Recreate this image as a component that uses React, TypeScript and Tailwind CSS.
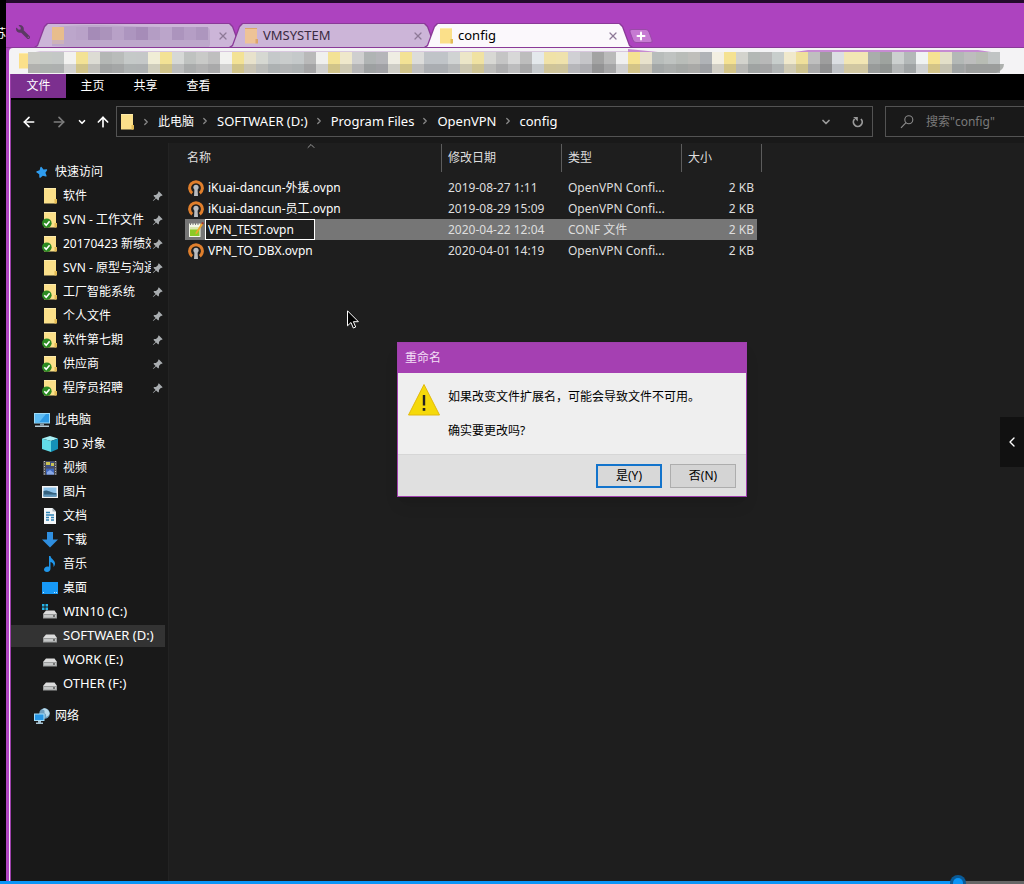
import type { ReactNode } from "react"
import { ArrowLeft, ArrowRight, ArrowUp, ChevronDown, ChevronLeft, ChevronRight, ChevronUp, Plus, X } from "lucide-react"
import { FaStar, FaWrench } from "react-icons/fa"
import { BsPinAngleFill } from "react-icons/bs"

const ribbon = ["主页", "共享", "查看"]

const folders = ["SOFTWAER (D:)", "Program Files", "OpenVPN", "config"]

const quickAccess = [
  { label: "软件", synced: false },
  { label: "SVN - 工作文件", synced: true },
  { label: "20170423 新绩效", synced: true },
  { label: "SVN - 原型与沟通", synced: false },
  { label: "工厂智能系统", synced: true },
  { label: "个人文件", synced: false },
  { label: "软件第七期", synced: true },
  { label: "供应商", synced: true },
  { label: "程序员招聘", synced: true },
]

const files = [
  { name: "iKuai-dancun-外援.ovpn", date: "2019-08-27 1:11", type: "OpenVPN Confi...", size: "2 KB" },
  { name: "iKuai-dancun-员工.ovpn", date: "2019-08-29 15:09", type: "OpenVPN Confi...", size: "2 KB" },
  { name: "VPN_TEST.ovpn", date: "2020-04-22 12:04", type: "CONF 文件", size: "2 KB", editing: true },
  { name: "VPN_TO_DBX.ovpn", date: "2020-04-01 14:19", type: "OpenVPN Confi...", size: "2 KB" },
]

// one colour per 12px block, left to right
const barBlocks = [
  "#c9cac4", "#c5c9c5", "#c4c8c6", "#f2f2f0", "#f3e295", "#dddcd4", "#b4b7b5", "#b9bcba", "#c5c9c8",
  "#c5c8c8", "#f0edd6", "#f3e295", "#d6d8d6", "#bfc2c0", "#c9cac8", "#bfbfbf", "#f2f2f0", "#f3e295",
  "#e8e2cc", "#d6d8d2", "#c5c9ca", "#c9cccc", "#c5c9ca", "#b9b9b9", "#f0f0ee", "#f3e295", "#efe8cb",
  "#cfcfcf", "#b0b4b4", "#b5b5b9", "#efede3", "#f3e295", "#dcdcda", "#c0c4c8", "#c0c4c8", "#d0d3d3",
  "#ece6c8", "#f0e2a2", "#d8d8d4", "#c5c5c5", "#d8d8d8", "#bdbdbd", "#e4e9ec", "#f0e2a8", "#efe2ac",
  "#d0d0d4", "#c5c5c8", "#a3a3a3", "#bababa", "#f0f0f0", "#f5e292", "#e8e2cc", "#b8bdbb", "#bfc3c1",
  "#b9bdb9", "#bfbfbb", "#b0b3b7", "#f3efe2", "#f5e292", "#d3d3cd", "#b3b8b5", "#b8b8b8", "#c8cecc",
  "#f0e9cc", "#efe09b", "#bfbfbf", "#9e9e9e", "#dcdfe3", "#f2e6b4", "#f2e6b4", "#a9adab", "#9ea39f",
  "#ccd0cf", "#b3b8b8", "#f0f3f3", "#f5e292", "#e3dfc8", "#b3b8b6", "#bdbdbd", "#b8bcb4", "#c0c4c4",
]

const tabBlocks = [
  "#e8bd8c", "#bca6cb", "#b9a2c8", "#a58bb7", "#ab93bb", "#b8a1c7", "#ad95bf", "#a68cb8", "#b49dc4",
  "#bba5ca", "#ac94bd", "#b59ec5", "#ad96be",
]

function FolderIcon({ synced = false, dimmed = false }: { synced?: boolean; dimmed?: boolean }) {
  return (
    <svg viewBox="0 0 16 16" className="size-4 shrink-0" aria-hidden="true">
      <path d="M2 0h12v15.500H2z" fill={dimmed ? "#eec397" : "#fbe08a"} />
      <path d="M12.500 11H15v4.500h-2.500z" fill={dimmed ? "#dca56c" : "#e3bb55"} />
      <path d="M2 0h12v1H2z" fill={dimmed ? "#dca56c" : "#fdebab"} />
      {synced && (
        <>
          <circle cx="4.800" cy="11.200" r="4.800" fill="#2c8a22" />
          <path d="M2.300 11.300l1.900 2 3.400-4" fill="none" stroke="#fff" strokeWidth="1.600" />
        </>
      )}
    </svg>
  )
}

function MonitorIcon() {
  return (
    <svg viewBox="0 0 16 16" className="size-4 shrink-0" aria-hidden="true">
      <path d="M0 1h16v10.500H0z" fill="#9fdcf8" />
      <path d="M1 2h14v8.500H1z" fill="#2e9be6" />
      <path d="M1 2h11L5 10.500H1z" fill="#5fbdf4" />
      <path d="M6 11.500h4v2H6z" fill="#8aa0ad" />
      <path d="M1 13.500h14v1.500H1z" fill="#b7cbd6" />
    </svg>
  )
}

function CubeIcon() {
  return (
    <svg viewBox="0 0 16 16" className="size-4 shrink-0" aria-hidden="true">
      <path d="M8 0l8 2.500L9 5 0 2.500z" fill="#a9f0f5" />
      <path d="M0 2.500L9 5v11L0 13z" fill="#62dbe6" />
      <path d="M9 5l7-2.500V13l-7 3z" fill="#1591b8" />
    </svg>
  )
}

function VideoIcon() {
  return (
    <svg viewBox="0 0 16 16" className="size-4 shrink-0" aria-hidden="true">
      <path d="M1 1h14v14H1z" fill="#4d4d50" />
      <path d="M4 1.500h8v6H4z" fill="#3e4f86" />
      <path d="M4 2h4v3H4zM9 3h3v3H9z" fill="#c9c253" />
      <path d="M4 8.500h8v6H4z" fill="#3f66bd" />
      <path d="M5 12l3-2 4 3v1.500H5z" fill="#89a9e8" />
      <path d="M2.500 1v14M13.500 1v14" stroke="#c4c4c4" strokeWidth="1" strokeDasharray="1 1.500" />
    </svg>
  )
}

function PictureIcon() {
  return (
    <svg viewBox="0 0 16 16" className="size-4 shrink-0" aria-hidden="true">
      <path d="M0 2h16v12H0z" fill="#f4f4f4" />
      <path d="M1.500 3.500h13v9h-13z" fill="#8fc4ec" />
      <path d="M1.500 7c4-2 7 2 13 2v3.500h-13z" fill="#35617e" />
      <path d="M1.500 10.500h13v2h-13z" fill="#5f97bd" />
    </svg>
  )
}

function DocumentIcon() {
  return (
    <svg viewBox="0 0 16 16" className="size-4 shrink-0" aria-hidden="true">
      <path d="M2 0h8.500L14 3.500V16H2z" fill="#f3f6f8" />
      <path d="M10.500 0L14 3.500h-3.500z" fill="#a8b4bb" />
      <path d="M4 4.500h4M4 7h8M4 9.500h3M9 9.500h3M4 12h3M9 12h3" stroke="#2f83b5" strokeWidth="1.300" />
    </svg>
  )
}

function DownloadIcon() {
  return (
    <svg viewBox="0 0 16 16" className="size-4 shrink-0" aria-hidden="true">
      <path d="M5 0h6v7.500h5L8 15.500 0 7.500h5z" fill="#2f8fe0" />
    </svg>
  )
}

function MusicIcon() {
  return (
    <svg viewBox="0 0 16 16" className="size-4 shrink-0" aria-hidden="true">
      <path d="M7 0h1.500c.300 3 4.500 4 4.500 7.500 0 1.500-.700 2.500-1.500 3.500.500-3-1-4.500-3-5v6.500C8.500 14.500 7 16 5 16s-3-1-3-2.500S3.500 10.500 5.500 10.500c.600 0 1 .1 1.500.3z" fill="#1f96ea" />
    </svg>
  )
}

function DesktopIcon() {
  return (
    <svg viewBox="0 0 16 16" className="size-4 shrink-0" aria-hidden="true">
      <path d="M0 2h16v12H0z" fill="#1798f5" />
      <path d="M1 12.500h2M12 12.500h3" stroke="#bfe4ff" strokeWidth="1" strokeDasharray="1 1" />
    </svg>
  )
}

function DriveIcon({ system = false }: { system?: boolean }) {
  return (
    <svg viewBox="0 0 16 16" className="size-4 shrink-0" aria-hidden="true">
      {system && <path d="M0 0h2.500v2.500H0zM3.500 0H6v2.500H3.500zM0 3.500h2.500V6H0zM3.500 3.500H6V6H3.500z" fill="#27b5ea" />}
      <path d="M4 6.500h8.500L15 10H1z" fill="#dcdcdc" />
      <path d="M1 10h14v4.500H1z" fill="#9a9c9c" />
      <path d="M2 11h12v2.500H2z" fill="#c3c5c5" />
      <path d="M11 11.500h2v1h-2z" fill="#222" />
    </svg>
  )
}

function NetworkIcon() {
  return (
    <svg viewBox="0 0 16 16" className="size-4 shrink-0" aria-hidden="true">
      <circle cx="10.500" cy="5.500" r="5.300" fill="#6e9fc0" />
      <path d="M8 1.500c2 0 3 1 2.500 2.500S13 6 12 8s3 0 3.500-2S13 0 10 .3z" fill="#b9dbec" />
      <path d="M0 5.500h10.500V13H0z" fill="#a4ddf9" />
      <path d="M1 6.500h8.500V12H1z" fill="#2796e4" />
      <path d="M4 13h3v1.500H4zM2 14.500h7v1.500H2z" fill="#a8c3d2" />
    </svg>
  )
}

function OvpnIcon() {
  return (
    <svg viewBox="0 0 16 16" className="size-4 shrink-0" aria-hidden="true">
      <path d="M4.200 13.200A6.400 6.400 0 1 1 11.800 13.200" fill="none" stroke="#e07f2c" strokeWidth="3" />
      <circle cx="8" cy="7.300" r="2.600" fill="#b9bcc0" />
      <path d="M6.500 8h3l.5 8H6z" fill="#b9bcc0" />
    </svg>
  )
}

function NotepadIcon() {
  return (
    <svg viewBox="0 0 16 16" className="size-4 shrink-0" aria-hidden="true">
      <path d="M1 1.500h11.500v13.500H1z" fill="#f3f7e8" />
      <path d="M2 7h9.500v7H2z" fill="#8bc926" />
      <path d="M2 5h9.500v2.500H2z" fill="#d9e8b0" />
      <path d="M2.500 0v3M5 0v3M7.500 0v3M10 0v3" stroke="#777" strokeWidth="1" />
      <path d="M15 2.500L9 11.500l-1.500 1 .2-2L13.300 1.300z" fill="#f2a52c" />
      <path d="M15 2.500l-1.700-1.200.9-1.300L16 1z" fill="#a62e24" />
    </svg>
  )
}

function SearchIcon() {
  return (
    <svg viewBox="0 0 14 14" className="size-3.5 shrink-0" aria-hidden="true">
      <circle cx="8.800" cy="4.700" r="4" fill="none" stroke="#8a8a8a" strokeWidth="1.100" />
      <path d="M6 7.600L1 12.800" stroke="#8a8a8a" strokeWidth="1.200" />
    </svg>
  )
}

function RefreshIcon() {
  return (
    <svg viewBox="0 0 12 12" className="size-3" aria-hidden="true">
      <path d="M2.600 3A4.400 4.400 0 1 0 9 3" fill="none" stroke="#9a9a9a" strokeWidth="1.800" />
      <path d="M1.200 1h4.600v4.400z" fill="#9a9a9a" />
    </svg>
  )
}

function Tab({ label, active = false, children }: { label?: string; active?: boolean; children: ReactNode }) {
  return (
    <div
      className={
        "-mr-3.5 h-6 w-[209px] shrink-0 bg-[#8a3a98] [clip-path:polygon(0_100%,3px_22px,10px_3px,13px_0,196px_0,199px_3px,206px_22px,100%_100%)] " +
        (active ? "relative z-10" : "")
      }
    >
      <div
        className={
          "mt-px flex h-6 items-center pr-3.5 pl-6 [clip-path:polygon(1px_100%,4px_22px,11px_3px,14px_0,195px_0,198px_3px,205px_22px,208px_100%)] " +
          (active ? "bg-[#fbf8fc] text-black" : "bg-[#ccb5d8] text-[#3a2a42]")
        }
      >
        {children}
        {label && <span className="text-[13px]">{label}</span>}
        <button aria-label="关闭标签" className="ml-auto text-[#8e7a98]">
          <X className="size-3" strokeWidth={2.500} />
        </button>
      </div>
    </div>
  )
}

function Crumb({ children }: { children: ReactNode }) {
  return (
    <span className="flex items-center">
      <ChevronRight className="mx-1.5 size-2.5 text-[#8a8a8a]" strokeWidth={3} />
      <a href="#" className="pl-px whitespace-nowrap">{children}</a>
    </span>
  )
}

function SideItem({ icon, label, top = false, selected = false, pinned = false, drive = false }: {
  icon: ReactNode
  label: string
  top?: boolean
  selected?: boolean
  pinned?: boolean
  drive?: boolean
}) {
  return (
    <li>
      <a
        href="#"
        className={
          "mr-[3px] flex h-6 items-center gap-[5px] border-y border-[#191919] " +
          (top ? "pl-[23px] " : "pl-[31px] ") +
          (drive ? "text-[13px] " : "") +
          (selected ? "bg-[#333333]" : "")
        }
      >
        {icon}
        <span className="min-w-0 flex-1 overflow-hidden whitespace-nowrap">{label}</span>
        {pinned && <BsPinAngleFill className="mr-0.5 -ml-1 size-[11px] shrink-0 text-[#a9adb0]" />}
      </a>
    </li>
  )
}

function RenameDialog() {
  return (
    <div
      role="dialog"
      aria-label="重命名"
      className="absolute top-[342px] left-[397px] z-20 w-[350px] border border-[#a040ae] bg-[#efefef] text-xs text-black shadow-lg"
    >
      <div className="flex h-[30px] items-center bg-[#a540b2] pl-[7px] text-[#f3dff6]">重命名</div>
      <div className="flex h-[81px] gap-2 pt-[11px] pl-2.5">
        <svg viewBox="0 0 32 32" className="size-8 shrink-0" aria-hidden="true">
          <path d="M16 0.500L31.500 31H0.500z" fill="#f5d90a" stroke="#e2b90c" strokeWidth="1" />
          <path d="M16 11v10.500" stroke="#222" strokeWidth="2.400" />
          <path d="M16 24v2.800" stroke="#222" strokeWidth="2.600" />
        </svg>
        <div className="flex flex-col gap-4 pt-1">
          <p className="leading-[18px]">如果改变文件扩展名，可能会导致文件不可用。</p>
          <p className="leading-[18px]">确实要更改吗?</p>
        </div>
      </div>
      <div className="flex h-[42px] items-center justify-end gap-2 border-t border-[#d6d6d6] bg-[#e0e0e0] pr-2.5">
        <button className="h-6 w-[66px] border-2 border-[#1374cc] bg-[#d8d8d8]">是(Y)</button>
        <button className="h-6 w-[66px] border border-[#adadad] bg-[#d4d4d4]">否(N)</button>
      </div>
    </div>
  )
}

export default function App() {
  return (
    <div className="relative flex min-h-screen flex-col overflow-hidden bg-black font-['Noto_Sans','Noto_Sans_CJK_SC',sans-serif] text-xs text-white">
      <div className="flex flex-1">
        <div className="flex w-1.5 shrink-0 justify-end overflow-hidden pt-[26px]">
          <span className="shrink-0 leading-4">苏</span>
        </div>

        <div className="flex min-w-0 flex-1 flex-col border-t-[3px] border-[#230a2b] bg-[#ad43bf]">
          {/* Tab strip */}
          <div className="flex h-[45px] items-end border-b border-[#8a3a98]">
            <FaWrench className="mr-1 mb-2 ml-2.5 size-3.5 shrink-0 -scale-x-100 text-[#5b3a63]" />
            <Tab>
              <svg viewBox="0 0 160 24" className="-ml-1.5 h-6 w-40 shrink-0" aria-hidden="true">
                <path d="M0 4C30-2 70 3 110 3h44q4 0 4 5v12q0 4-5 4H40L0 22z" fill="#bda8cb" />
                {tabBlocks.map((fill, i) => (
                  <rect key={i} x={i * 12} y="3" width="12" height="13" fill={fill} />
                ))}
                <path d="M0 16h12v4H0z" fill="#cdb3b8" />
              </svg>
            </Tab>
            <Tab label="VMSYSTEM">
              <span className="mr-1 -ml-4 flex pl-1.5">
                <FolderIcon dimmed />
              </span>
            </Tab>
            <Tab label="config" active>
              <span className="mr-1 -ml-4 flex pl-1.5">
                <FolderIcon />
              </span>
            </Tab>
            <button aria-label="新标签" className="mb-1 ml-2.5 flex h-3.5 w-6 items-center justify-center">
              <span className="flex h-3.5 w-5 skew-x-[20deg] items-center justify-center rounded-[3px] border border-[#9a4aa8] bg-[#c67ad2]">
                <Plus className="size-3 -skew-x-[20deg]" strokeWidth={4} />
              </span>
            </button>
          </div>

          {/* Bookmark bar */}
          <div className="ml-[3px] flex h-[26px] items-center overflow-hidden rounded-tl bg-[#f4f3f5] pl-2">
            <FolderIcon />
            <svg viewBox="28 0 976 26" className="-ml-[5px] h-[26px] w-[976px] shrink-0" aria-hidden="true">
              <path d="M28 12q2-8 12-9h590v3H28z" fill="#d9c8df" />
              <path d="M628 1l40 4h120l20-3h170l20 3v2H628z" fill="#c68bd2" />
              {barBlocks.map((fill, i) => (
                <rect key={i} x={28 + i * 12} y="4" width="12" height="21" fill={fill} />
              ))}
              <path d="M1000 16h4q0 6-8 9h-30v-9z" fill="#adb0ae" />
              <path d="M28 16h972v9H28z" fill="#5a5a60" opacity=".22" />
            </svg>
          </div>

          <div className="ml-[3px] flex flex-1 flex-col border-l border-[#f3e6f6]">
            <div className="flex flex-1 flex-col border-l border-[#9b3fa8] bg-[#1e1e1e]">
              {/* Ribbon */}
              <nav className="flex h-[26px] bg-black">
                <button className="h-6 w-[55px] bg-[#7c2f8f]">文件</button>
                {ribbon.map((item) => (
                  <button key={item} className="h-6 w-[53px]">{item}</button>
                ))}
              </nav>

              {/* Navigation bar */}
              <div className="flex h-[43px] items-center bg-[#191919]">
                <div className="flex w-[105px] shrink-0 items-center pl-2.5">
                  <button aria-label="后退"><ArrowLeft className="size-4" strokeWidth={2.500} /></button>
                  <button aria-label="前进" className="ml-3.5 text-[#7d7d7d]"><ArrowRight className="size-4" strokeWidth={2.500} /></button>
                  <button aria-label="最近的位置" className="ml-2.5"><ChevronDown className="size-2.5" strokeWidth={4} /></button>
                  <button aria-label="向上" className="ml-2"><ArrowUp className="size-4" strokeWidth={2.500} /></button>
                </div>
                <div className="flex h-[31px] min-w-0 flex-1 items-center border border-[#535353] pr-2 pl-0.5">
                  <FolderIcon />
                  <Crumb>此电脑</Crumb>
                  <div className="flex text-[13px]">
                    {folders.map((folder) => (
                      <Crumb key={folder}>{folder}</Crumb>
                    ))}
                  </div>
                  <button aria-label="历史记录" className="ml-auto text-[#9a9a9a]"><ChevronDown className="size-3" strokeWidth={3.500} /></button>
                  <button aria-label="刷新" className="ml-5"><RefreshIcon /></button>
                </div>
                <label className="ml-3 flex h-[31px] w-[139px] shrink-0 items-center gap-3 border border-r-0 border-[#535353] pl-3.5">
                  <SearchIcon />
                  <input aria-label="搜索" placeholder={'搜索"config"'} className="w-20 bg-transparent outline-none placeholder:text-[#7a7a7a]" />
                </label>
              </div>

              <div className="flex flex-1">
                {/* Navigation pane */}
                <aside className="w-[158px] shrink-0 border-r border-[#232323] bg-[#191919] pt-[17px]">
                  <ul>
                    <SideItem top icon={<FaStar className="size-4 -rotate-12 p-0.5 text-[#2f9df0]" />} label="快速访问" />
                    {quickAccess.map((item) => (
                      <SideItem key={item.label} icon={<FolderIcon synced={item.synced} />} label={item.label} pinned />
                    ))}
                  </ul>
                  <ul className="mt-2">
                    <SideItem top icon={<MonitorIcon />} label="此电脑" />
                    <SideItem icon={<CubeIcon />} label="3D 对象" />
                    <SideItem icon={<VideoIcon />} label="视频" />
                    <SideItem icon={<PictureIcon />} label="图片" />
                    <SideItem icon={<DocumentIcon />} label="文档" />
                    <SideItem icon={<DownloadIcon />} label="下载" />
                    <SideItem icon={<MusicIcon />} label="音乐" />
                    <SideItem icon={<DesktopIcon />} label="桌面" />
                    <SideItem drive icon={<DriveIcon system />} label="WIN10 (C:)" />
                    <SideItem drive icon={<DriveIcon />} label="SOFTWAER (D:)" selected />
                    <SideItem drive icon={<DriveIcon />} label="WORK (E:)" />
                    <SideItem drive icon={<DriveIcon />} label="OTHER (F:)" />
                  </ul>
                  <ul className="mt-2">
                    <SideItem top icon={<NetworkIcon />} label="网络" />
                  </ul>
                </aside>

                {/* File list */}
                <main className="min-w-0 flex-1 pt-px pl-4">
                  <table className="w-[577px] table-fixed border-separate border-spacing-0 text-left text-[#dedede]">
                    <colgroup>
                      <col className="w-[257px]" />
                      <col className="w-[120px]" />
                      <col className="w-[120px]" />
                      <col className="w-[75px]" />
                      <col className="w-[5px]" />
                    </colgroup>
                    <thead>
                      <tr className="h-7">
                        <th className="relative border-r border-[#5c5c5c] pl-0.5 font-normal">
                          名称
                          <ChevronUp className="absolute -top-1 left-[120px] size-3 text-[#9a9a9a]" strokeWidth={2} />
                        </th>
                        <th className="border-r border-[#5c5c5c] pl-1.5 font-normal">修改日期</th>
                        <th className="border-r border-[#5c5c5c] pl-1.5 font-normal">类型</th>
                        <th colSpan={2} className="border-r border-[#5c5c5c] pl-1.5 font-normal">大小</th>
                      </tr>
                    </thead>
                    <tbody>
                      <tr className="h-[5px]"><td colSpan={5} className="p-0" /></tr>
                      {files.map((file) => (
                        <tr key={file.name} className={"h-[21px] leading-5 whitespace-nowrap " + (file.editing ? "*:bg-[#767676]" : "")}>
                          <td className="p-0 pl-[3px]">
                            <div className="flex items-center">
                              {file.editing ? <NotepadIcon /> : <OvpnIcon />}
                              {file.editing ? (
                                <input
                                  aria-label="文件名"
                                  defaultValue={file.name}
                                  className="ml-px h-[21px] w-[110px] border border-white bg-[#1e1e1e] px-0.5 text-white outline-none"
                                />
                              ) : (
                                <span className="pl-1 text-white">{file.name}</span>
                              )}
                            </div>
                          </td>
                          <td className="p-0 pl-1.5">{file.date}</td>
                          <td className="p-0 pl-1.5">{file.type}</td>
                          <td className="p-0 pr-[3px] text-right">{file.size}</td>
                        </tr>
                      ))}
                    </tbody>
                  </table>
                </main>
              </div>
            </div>
          </div>
        </div>
      </div>

      {/* Playback position */}
      <input
        type="range"
        aria-label="播放进度"
        defaultValue={94}
        className="block h-[3px] w-full appearance-none bg-[linear-gradient(to_right,#0a95f7_93.500%,#666_93.500%)] [&::-webkit-slider-thumb]:size-2.5 [&::-webkit-slider-thumb]:appearance-none [&::-webkit-slider-thumb]:rounded-full [&::-webkit-slider-thumb]:bg-[#0a95f7] [&::-webkit-slider-thumb]:shadow-[0_0_0_3px_#0a5a96]"
      />

      <RenameDialog />

      <button aria-label="展开侧栏" className="absolute top-[417px] right-0 flex h-[50px] w-6 items-center justify-center bg-[#111111]">
        <ChevronLeft className="size-4" strokeWidth={2} />
      </button>

      <svg viewBox="0 0 12 19" className="absolute top-[310px] left-[347px] h-[19px] w-3" aria-hidden="true">
        <path d="M.5.8v15l3.500-3.300 2.300 5.500 2.400-1-2.300-5.300h5z" fill="#000" stroke="#fff" strokeWidth="1" />
      </svg>
    </div>
  )
}
